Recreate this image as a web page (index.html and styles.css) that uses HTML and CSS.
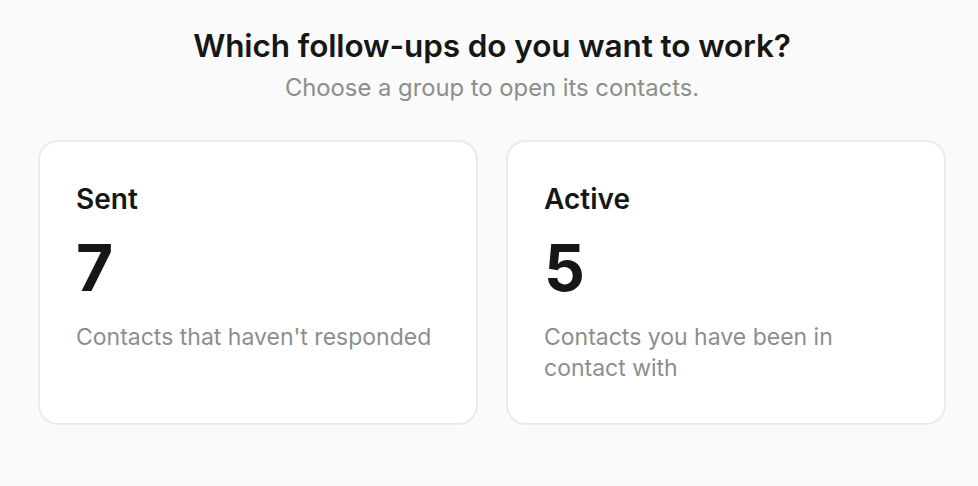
FILE: index.html
```html
<!DOCTYPE html>
<html lang="en">
<head>
<meta charset="utf-8">
<link rel="stylesheet" href="styles.css">
</head>
<body>
<main class="page">
  <header class="intro">
    <h1 class="title">Which follow-ups do you want to work?</h1>
    <p class="subtitle">Choose a group to open its contacts.</p>
  </header>
  <section class="cards">
    <button class="card">
      <span class="card-label">Sent</span>
      <span class="card-count">7</span>
      <span class="card-desc">Contacts that haven't responded</span>
    </button>
    <button class="card">
      <span class="card-label">Active</span>
      <span class="card-count">5</span>
      <span class="card-desc">Contacts you have been in contact with</span>
    </button>
  </section>
</main>
</body>
</html>
```

FILE: styles.css
```css
* { box-sizing: border-box; }
html, body { margin: 0; padding: 0; }
body {
  background: #fafafa;
  font-family: Inter, "Noto Sans", sans-serif;
  color: #151715;
  width: 978px;
  height: 486px;
  overflow: hidden;
}
.page {
  padding: 27px 32px 0 38px;
}
.intro {
  text-align: center;
}
.title {
  margin: 0;
  font-size: 31.5px;
  font-weight: 600;
  line-height: 38px;
  letter-spacing: -0.1px;
  color: #151715;
}
.subtitle {
  margin: 8px 0 0;
  font-size: 23.8px;
  line-height: 30px;
  color: #8b8f8b;
}
.cards {
  margin-top: 37px;
  display: grid;
  grid-template-columns: 1fr 1fr;
  gap: 28px;
}
.card {
  display: flex;
  flex-direction: column;
  align-items: flex-start;
  text-align: left;
  height: 285px;
  background: #fff;
  border: 2px solid #ebebeb;
  border-radius: 20px;
  padding: 40px 28px 0 36px;
  font-family: inherit;
  cursor: pointer;
}
.card-label {
  font-size: 28px;
  font-weight: 600;
  line-height: 34px;
  color: #151715;
}
.card-count {
  margin-top: 20px;
  font-size: 64px;
  font-weight: 700;
  line-height: 64px;
  color: #151715;
}
.card-desc {
  margin-top: 22px;
  font-size: 23px;
  line-height: 31px;
  color: #8b8f8b;
}
```
